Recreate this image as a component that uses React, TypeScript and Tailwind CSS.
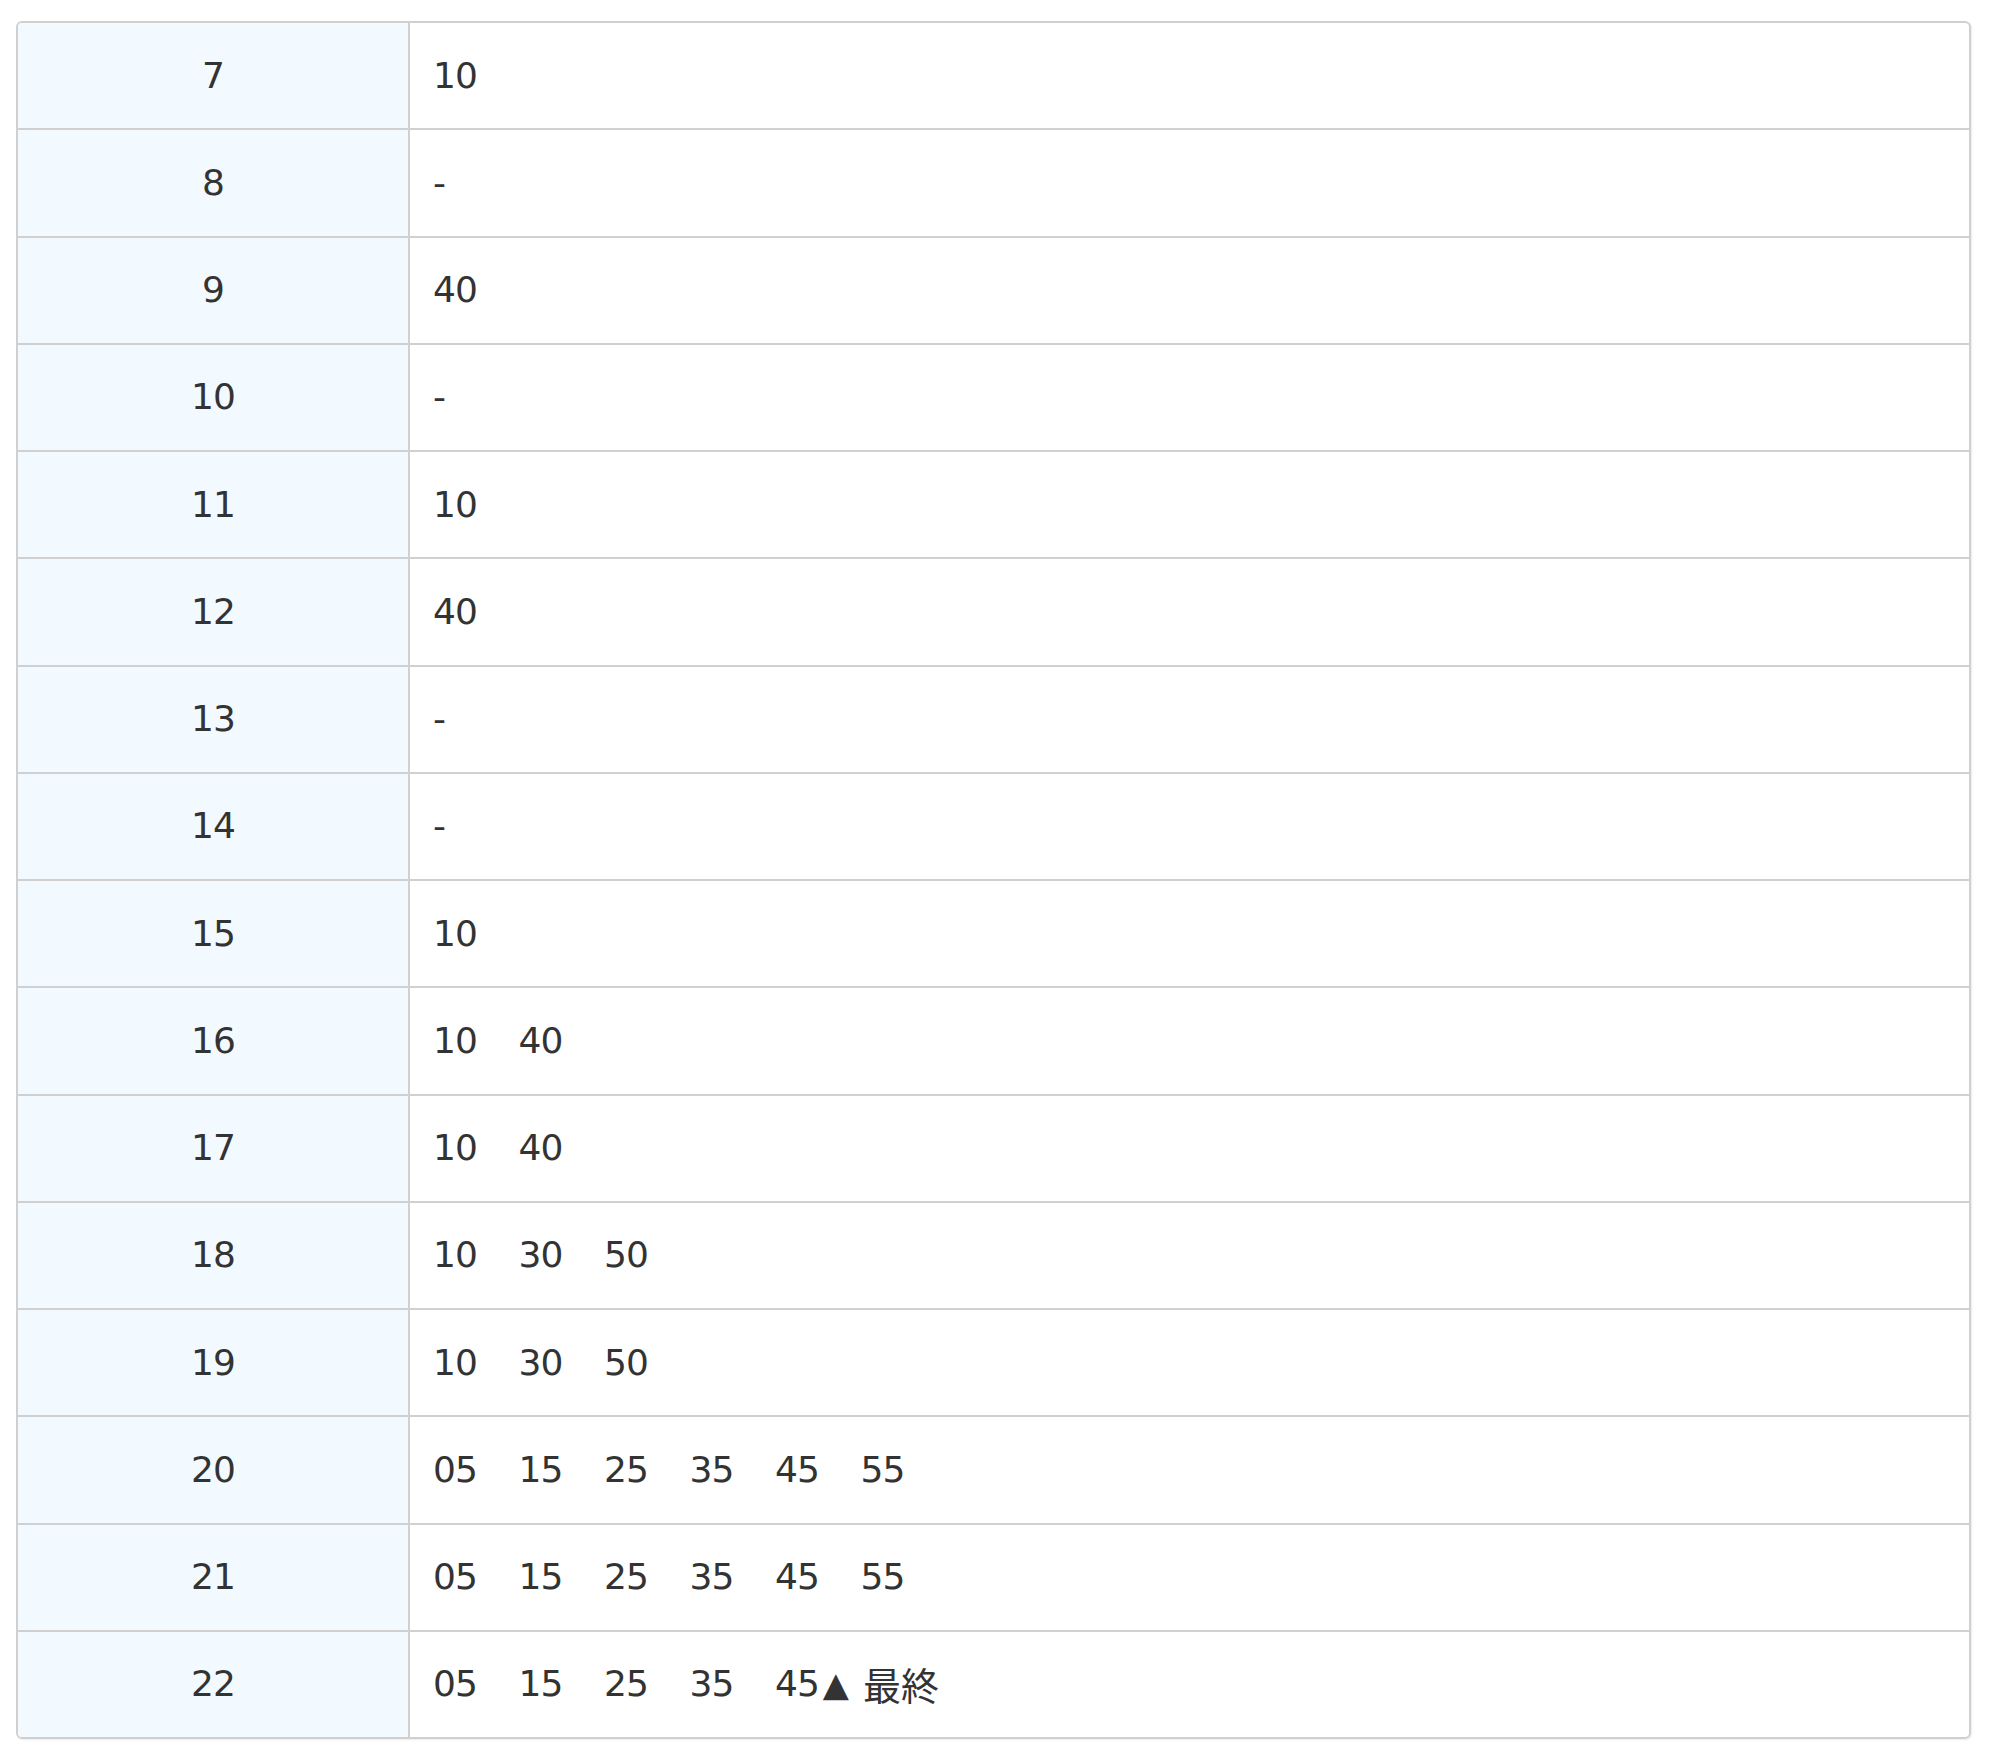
const rows: { hour: string; mins: string[]; last?: boolean }[] = [
  { hour: "7", mins: ["10"] },
  { hour: "8", mins: ["-"] },
  { hour: "9", mins: ["40"] },
  { hour: "10", mins: ["-"] },
  { hour: "11", mins: ["10"] },
  { hour: "12", mins: ["40"] },
  { hour: "13", mins: ["-"] },
  { hour: "14", mins: ["-"] },
  { hour: "15", mins: ["10"] },
  { hour: "16", mins: ["10", "40"] },
  { hour: "17", mins: ["10", "40"] },
  { hour: "18", mins: ["10", "30", "50"] },
  { hour: "19", mins: ["10", "30", "50"] },
  { hour: "20", mins: ["05", "15", "25", "35", "45", "55"] },
  { hour: "21", mins: ["05", "15", "25", "35", "45", "55"] },
  { hour: "22", mins: ["05", "15", "25", "35", "45"], last: true },
];

const App = () => {
  return (
    <div className="min-h-screen bg-white pt-[21px] pl-[16px]">
      <div
        className="w-[1955px] border-2 border-[#d0d0d0] rounded-[6px] overflow-hidden text-[#333] text-[36px] shadow-[1px_1px_2px_rgba(0,0,0,0.08)]"
        style={{ fontFamily: '"DejaVu Sans", "Noto Sans CJK JP", sans-serif' }}
      >
        {rows.map((row, i) => (
          <div
            key={row.hour}
            className={`flex ${i > 0 ? "h-[107.25px] border-t-2 border-[#d0d0d0]" : "h-[105.25px]"}`}
          >
            <div className="w-[392px] shrink-0 bg-[#f3faff] border-r-2 border-[#d0d0d0] flex items-center justify-center">
              <span className="tracking-[-1px]">{row.hour}</span>
            </div>
            <div className="flex-1 flex items-center pl-[23px]">
              {row.mins.map((m, j) => (
                <span
                  key={j}
                  className={`tracking-[-1px] whitespace-pre ${j < row.mins.length - 1 ? "w-[85.5px]" : ""}`}
                >
                  {m}
                </span>
              ))}
              {row.last && (
                <>
                  <span className="ml-[4px] text-[34px]">▲</span>
                  <span
                    className="ml-[14px] text-[38px] leading-none"
                    style={{ fontFamily: '"Noto Sans CJK JP", sans-serif' }}
                  >
                    最終
                  </span>
                </>
              )}
            </div>
          </div>
        ))}
      </div>
    </div>
  );
};

export default App;
